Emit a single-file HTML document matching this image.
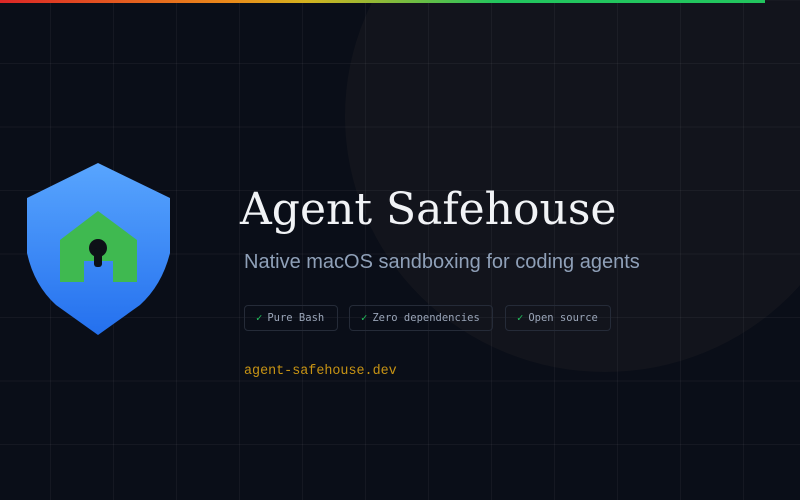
<!DOCTYPE html>
<html><head><meta charset="utf-8"><style>
body{margin:0;width:800px;height:500px;overflow:hidden;background:#0a0e18;position:relative;font-family:"Liberation Sans",sans-serif}
.grid{position:absolute;inset:0;background-image:linear-gradient(to right,rgba(255,255,255,0.045) 1px,transparent 1px),linear-gradient(to bottom,rgba(255,255,255,0.045) 1px,transparent 1px);background-size:63px 63.5px;background-position:50px 63px}
.circ{position:absolute;left:345px;top:-140px;width:520px;height:512px;border-radius:50%;background:rgba(30,30,34,0.4)}
.bar{position:absolute;left:0;top:0;width:765px;height:3px;background:linear-gradient(to right,#dc2626,#ea8a1a 30%,#d4b21f 40%,#22c55e 65%,#22c55e)}
h1{position:absolute;left:240px;top:184px;margin:0;font-family:"DejaVu Serif","Liberation Serif",serif;font-weight:400;font-size:44px;color:#f1f3f6;white-space:nowrap}
.sub{position:absolute;left:244px;top:251px;font-size:20px;color:#8fa0b8;white-space:nowrap}
.b{position:absolute;top:305px;height:26px;border:1px solid #252b38;border-radius:4px;font-family:"DejaVu Sans Mono","Liberation Mono",monospace;font-size:10.5px;color:#9aa5b8;line-height:24px;padding:0 11px;box-sizing:border-box;white-space:nowrap}
.b span{color:#22c55e;margin-right:5px}
.url{position:absolute;left:244px;top:364px;font-family:"Liberation Mono",monospace;font-size:13.4px;color:#c89414}
</style></head><body>
<div class="circ"></div>
<div class="grid"></div>
<div class="bar"></div>
<svg style="position:absolute;left:0;top:0" width="200" height="360">
<defs><linearGradient id="g" x1="0" y1="0" x2="0" y2="1"><stop offset="0" stop-color="#58a5fe"/><stop offset="1" stop-color="#2470ee"/></linearGradient></defs>
<path d="M98 163 L170 198 L170 253 Q162 285 140 305 L98 335 L56 305 Q34 285 27 253 L27 198 Z" fill="url(#g)"/>
<path d="M98 211 L137 240 L137 282 L113 282 L113 261 L84 261 L84 282 L60 282 L60 240 Z" fill="#3fb950"/>
<circle cx="98" cy="248" r="9" fill="#0d1117"/>
<rect x="94" y="248" width="8" height="19" rx="3" fill="#0d1117"/>
</svg>
<h1>Agent Safehouse</h1>
<div class="sub">Native macOS sandboxing for coding agents</div>
<div class="b" style="left:244px;width:94px"><span>✓</span>Pure Bash</div>
<div class="b" style="left:349px;width:144px"><span>✓</span>Zero dependencies</div>
<div class="b" style="left:505px;width:106px"><span>✓</span>Open source</div>
<div class="url">agent-safehouse.dev</div>
</body></html>
